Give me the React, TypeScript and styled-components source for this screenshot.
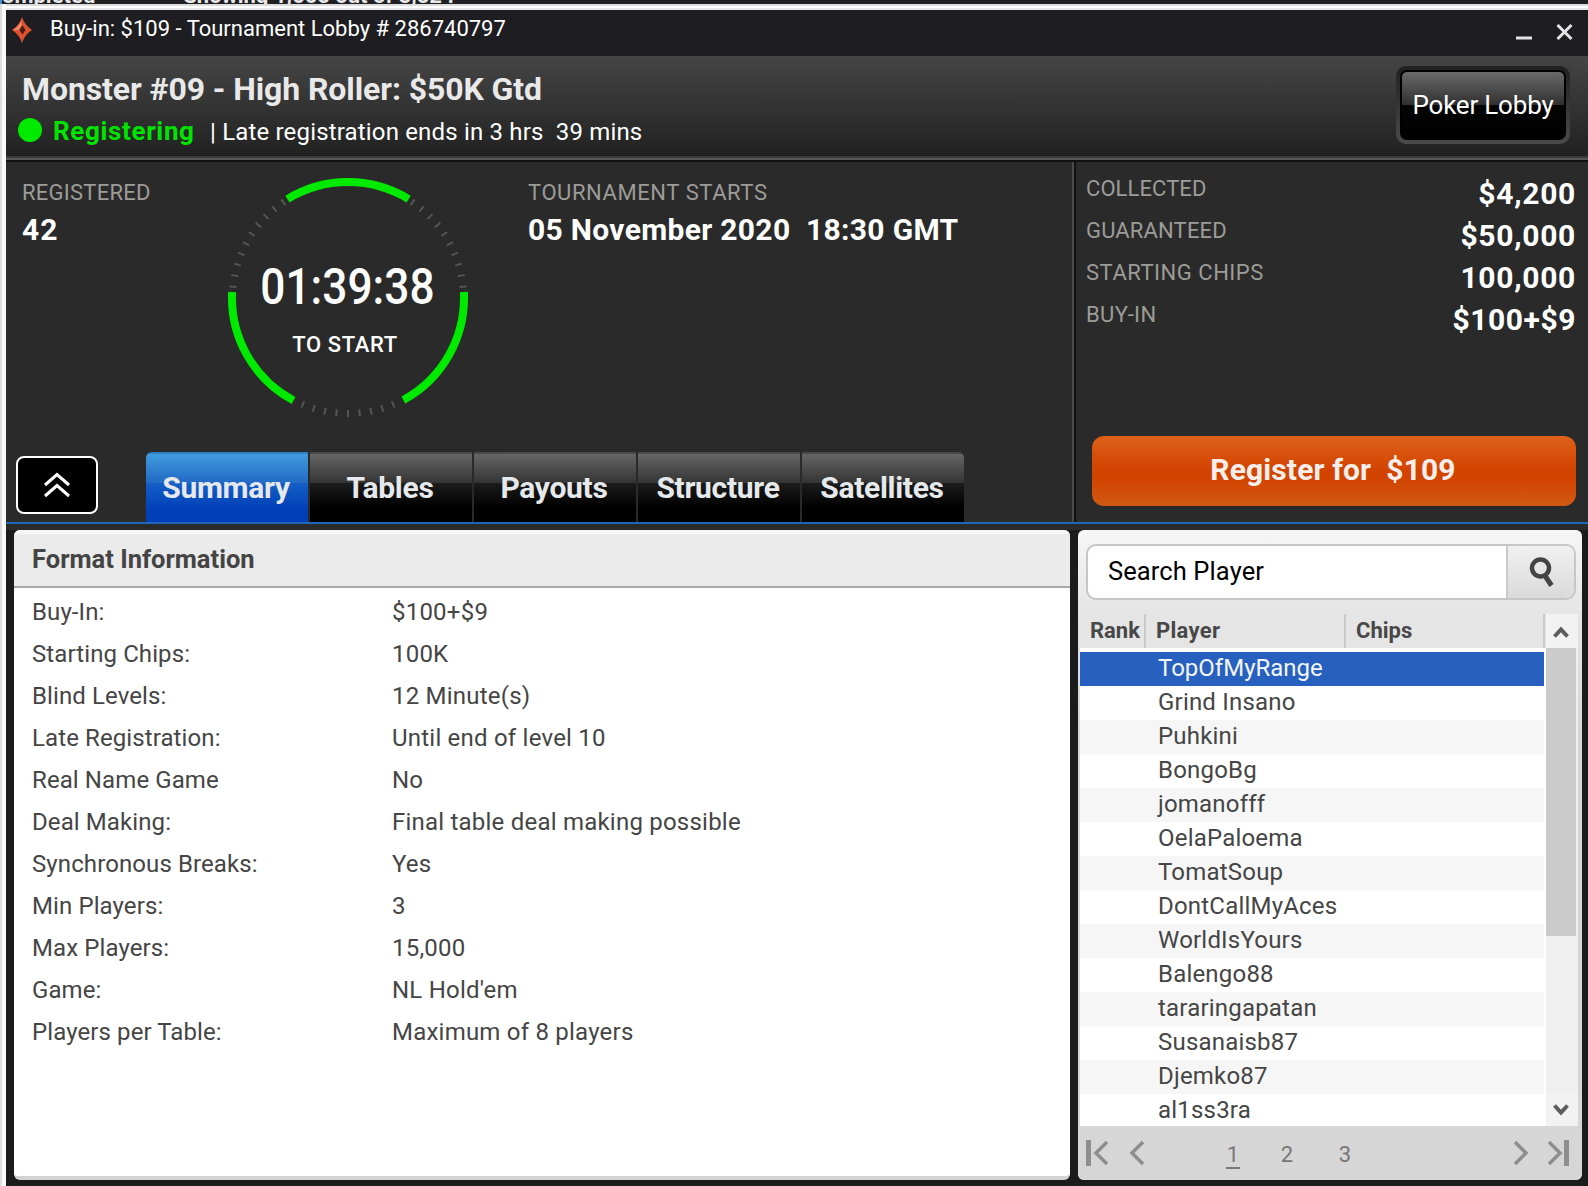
import React from 'react';
import styled, { createGlobalStyle, css } from 'styled-components';

const GlobalStyle = createGlobalStyle`
  *, *::before, *::after { box-sizing: border-box; }
  html, body { margin: 0; padding: 0; background: #1b1b1b; }
  body { font-family: Roboto, "Liberation Sans", sans-serif; overflow: hidden; }
  button { font: inherit; padding: 0; border: 0; margin: 0; cursor: pointer; }
  svg { display: block; flex: none; }
`;

const Screen = styled.div`
  width: 1588px;
  height: 1186px;
  display: flex;
  flex-direction: column;
  overflow: hidden;
`;

const Backdrop = styled.div`
  height: 4px;
  flex: none;
  display: flex;
  align-items: flex-end;
  gap: 88px;
  overflow: hidden;
  border-left: 2px solid #4a90d9;
  background: #1f1f24;
  color: #e8e8e8;
  font-size: 22px;
  font-weight: 700;
  line-height: 26px;
  white-space: nowrap;

  span { margin-bottom: -5px; }
`;

const Frame = styled.div`
  flex: 1;
  min-height: 0;
  display: flex;
  flex-direction: column;
  border-left: 6px solid #f8f8f8;
  box-shadow: inset 0 2px #dddddd, inset 0 4px #ffffff, inset 0 6px #e9e9e9;
  background: linear-gradient(90deg, #dedede 2px, #fafafa 2px) border-box;
  border-left-color: transparent;
  padding-top: 6px;
`;

const TitleBar = styled.header`
  height: 46px;
  flex: none;
  display: flex;
  align-items: flex-start;
  padding: 0 15px 0 6px;
  background: #1d1d22;
  color: #fff;
`;

const LogoSlot = styled.span`
  padding-top: 7px;
  width: 38px;
`;

const TitleText = styled.h1`
  flex: 1;
  margin: 6px 0 0;
  font-size: 22px;
  font-weight: 400;
  line-height: 25px;
`;

const WindowControls = styled.div`
  display: flex;
  gap: 24px;
  padding-top: 14px;
`;

const Banner = styled.section`
  height: 106px;
  flex: none;
  display: flex;
  justify-content: space-between;
  padding: 10px 18px 0 15px;
  background: linear-gradient(#454545, #212121 100px) no-repeat 0 0 / 100% 100px, #2a2a2a;
  box-shadow: inset 0 -2px #101010, inset 0 -4px #575757, inset 0 -6px #3a3a3a;
`;

const BannerTitle = styled.h2`
  margin: 4px 0 8px 1px;
  font-size: 32px;
  font-weight: 700;
  line-height: 38px;
  letter-spacing: -0.09px;
  color: #e9e9e9;
`;

const StatusRow = styled.div`
  display: flex;
  align-items: flex-start;
  line-height: 28px;
  color: #fff;
`;

const StatusDot = styled.span`
  width: 24px;
  height: 24px;
  margin: 2px 11px 0 -3px;
  border-radius: 50%;
  background: #00ea00;
`;

const StatusName = styled.strong`
  width: 157px;
  font-size: 26px;
  line-height: 30px;
  letter-spacing: 0.65px;
  color: #00e400;
`;

const StatusNote = styled.span`
  padding-top: 2px;
  font-size: 24px;
  letter-spacing: 0.17px;
  white-space: pre;
`;

const LobbyButton = styled.button`
  width: 174px;
  height: 78px;
  padding: 4px;
  border-radius: 10px;
  background: linear-gradient(#202020, #4b4b4b);
`;

const LobbyFace = styled.span`
  display: flex;
  align-items: center;
  justify-content: center;
  height: 70px;
  border: 2px solid #000;
  border-radius: 7px;
  background: linear-gradient(#6a6a6a, #303030 50%, #050505 50%, #000);
  color: #fff;
  font-size: 26px;
  letter-spacing: -0.2px;
`;

const InfoBand = styled.section`
  height: 362px;
  flex: none;
  display: flex;
  border-bottom: 2px solid #1f66b8;
  background: #2a2a2a;
`;

const InfoMain = styled.div`
  width: 1066px;
  display: flex;
  flex-direction: column;
  justify-content: space-between;
`;

const Stats = styled.div`
  display: grid;
  grid-template-columns: 206px 240px 1fr;
  padding-left: 16px;
`;

const Stat = styled.div<{ $indent?: number }>`
  padding: 18px 0 0 ${p => p.$indent ?? 0}px;
`;

const Caption = styled.div<{ $track?: number }>`
  font-size: 22px;
  line-height: 25px;
  letter-spacing: ${p => p.$track ?? 0.2}px;
  color: #9c9c98;
`;

const Figure = styled.div<{ $track?: number }>`
  font-size: 30px;
  font-weight: 700;
  line-height: 35px;
  letter-spacing: ${p => p.$track ?? 1}px;
  color: #fff;
  white-space: pre;
`;

const StatFigure = styled(Figure)`
  margin-top: 7px;
`;

const Dial = styled.div`
  display: grid;
  width: 240px;
  height: 240px;
  margin-top: 16px;

  > * { grid-area: 1 / 1; }
`;

const DialReadout = styled.div`
  display: flex;
  flex-direction: column;
  align-items: center;
  padding-top: 80px;
  color: #fff;
`;

const Clock = styled.time`
  margin-right: 2px;
  font-size: 50px;
  font-weight: 500;
  line-height: 58px;
  transform: scaleX(0.885);
`;

const DialLabel = styled.span`
  margin: 16px 6px 0 0;
  font-size: 22px;
  font-weight: 500;
  line-height: 25px;
  letter-spacing: 0.6px;
`;

const Toolbar = styled.div`
  display: flex;
  padding-left: 10px;
`;

const CollapseButton = styled.button`
  display: flex;
  align-items: center;
  justify-content: center;
  width: 82px;
  height: 58px;
  margin: 4px 48px 8px 0;
  border: 2px solid #fff;
  border-radius: 8px;
  background: #000;
`;

const Tabs = styled.nav`
  display: flex;
  gap: 2px;
`;

const Tab = styled.button<{ $active?: boolean }>`
  display: flex;
  justify-content: center;
  width: 162px;
  height: 70px;
  padding: 18px 2px 0 0;
  color: #e6e9ec;
  font-size: 30px;
  font-weight: 700;
  line-height: 35px;
  letter-spacing: -0.3px;
  background: linear-gradient(#4a4a4a 2px, #666 2px, #343434 31px, #1c1c1c 31px, #000 56px);

  &:first-child { border-top-left-radius: 6px; }
  &:last-child { border-top-right-radius: 6px; }

  ${p => p.$active && css`
    background: linear-gradient(#2d82c6 2px, #419cdc 2px, #2269c6 31px, #155fc6 31px, #003fb8 58px);
  `}
`;

const Prize = styled.aside`
  flex: 1;
  display: flex;
  flex-direction: column;
  padding: 14px 12px 16px 10px;
  border-left: 2px solid #111;
  box-shadow: -2px 0 #4a4a4a;
  margin-left: 2px;
`;

const PrizeRow = styled.div`
  display: flex;
  justify-content: space-between;
  height: 42px;
`;

const RegisterButton = styled.button`
  height: 70px;
  margin: auto 0 0 6px;
  padding: 16px 2px 19px 0;
  border-radius: 12px;
  background: linear-gradient(#dd611a, #d34300 48%, #d24400 62%, #d05a14);
  color: #f6eeea;
  font-size: 30px;
  font-weight: 700;
  line-height: 35px;
  letter-spacing: 0.12px;
  white-space: pre;
`;

const Body = styled.main`
  flex: 1;
  min-height: 0;
  display: flex;
  gap: 8px;
  padding: 6px 6px 6px 8px;
  background: linear-gradient(#2a2a2a 6px, #1b1b1b 6px);
`;

const FormatPanel = styled.section`
  width: 1056px;
  border-radius: 6px;
  overflow: hidden;
  background: #fff;
  border-bottom: 4px solid #d3d3d3;
`;

const FormatHeading = styled.h3`
  height: 58px;
  margin: 0;
  padding: 14px 18px 0;
  border-bottom: 2px solid #a8a8a8;
  background: linear-gradient(#f6f6f6 4px, #ebebeb 4px);
  color: #444;
  font-size: 25.5px;
  font-weight: 700;
  line-height: 30px;
`;

const FormatList = styled.dl`
  margin: 0;
  padding: 3px 18px 0;
`;

const FormatRow = styled.div`
  display: flex;
  height: 42px;
  font-size: 24px;
  line-height: 42px;
  letter-spacing: 0.22px;
  color: #454545;

  dt { width: 360px; letter-spacing: 0.1px; }
  dd { margin: 0; }
`;

const PlayerPanel = styled.section`
  width: 504px;
  display: flex;
  flex-direction: column;
  border-radius: 6px;
  overflow: hidden;
  background: linear-gradient(#f6f6f6, #e5e5e5 84px, #d6d6d6 200px);
`;

const Search = styled.form`
  display: flex;
  height: 56px;
  flex: none;
  margin: 14px 6px 14px 8px;
  border: 2px solid #c6c6c6;
  border-radius: 10px;
  overflow: hidden;
  background: #fff;
`;

const SearchText = styled.span`
  flex: 1;
  padding: 10px 0 0 20px;
  font-size: 25.5px;
  line-height: 30px;
  letter-spacing: 0.1px;
  color: #000;
`;

const SearchButton = styled.button`
  display: flex;
  width: 68px;
  padding: 10px 0 0 21px;
  border-left: 2px solid #cbcbcb;
  background: linear-gradient(#f0f0f0, #dadada);
`;

const Grid = styled.div`
  display: flex;
  height: 512px;
  flex: none;
  margin: 0 4px 0 2px;
  background: #fff;
`;

const Roster = styled.div`
  width: 466px;
  overflow: hidden;
`;

const RosterHead = styled.div`
  display: grid;
  grid-template-columns: 66px 200px 199px;
  height: 34px;
  margin-bottom: 4px;
  background: #e5e5e5;
`;

const HeadCell = styled.span<{ $track?: number }>`
  padding: 4px 0 0 10px;
  border-right: 2px solid #c9c9c9;
  font-size: 22px;
  font-weight: 700;
  line-height: 25px;
  letter-spacing: ${p => p.$track ?? 0}px;
  color: #484848;
`;

const PlayerRow = styled.div<{ $selected?: boolean }>`
  width: 464px;
  height: 34px;
  padding: 2px 0 0 78px;
  font-size: 24px;
  line-height: 28px;
  letter-spacing: 0.2px;
  color: #454545;

  &:nth-child(odd) { background: #f6f6f6; }

  ${p => p.$selected && css`
    && { background: #2860c0; color: #f2f6fc; letter-spacing: 0; }
  `}
`;

const RosterRows = styled.div``;

const ScrollBar = styled.div`
  flex: 1;
  display: flex;
  flex-direction: column;
  background: #efefef;
`;

const ScrollArrow = styled.button`
  display: flex;
  align-items: center;
  justify-content: center;
  height: 34px;
  padding: 2px 2px 0 0;
  background: #f2f2f2;
`;

const ScrollThumb = styled.div`
  width: 30px;
  height: 288px;
  margin-bottom: auto;
  background: #cbcbcb;
`;

const Pager = styled.footer`
  flex: 1;
  display: flex;
  align-items: flex-start;
  padding: 14px 12px 0 8px;
  background: #d6d6d6;
`;

const PagerGroup = styled.div<{ $gap: number }>`
  display: flex;
  gap: ${p => p.$gap}px;
`;

const Pages = styled.div`
  display: flex;
  flex: 1;
  gap: 40px;
  padding-left: 82px;
`;

const Page = styled.a<{ $current?: boolean }>`
  width: 14px;
  height: 29px;
  padding-top: 2px;
  text-align: center;
  font-size: 22px;
  line-height: 25px;
  color: #777;
  border-bottom: ${p => (p.$current ? '2px solid #777' : '0')};

  &:last-child { margin-left: 4px; }
`;

const polar = (deg: number, r: number) => {
  const a = (deg * Math.PI) / 180;
  return [120 + r * Math.sin(a), 120 - r * Math.cos(a)].map(n => n.toFixed(2)).join(' ');
};

const arc = (from: number, to: number) => `M${polar(from, 116)}A116 116 0 0 1 ${polar(to, 116)}`;

const ticks = [
  ...Array.from({ length: 10 }, (_, i) => 34 + i * 5.6),
  ...Array.from({ length: 9 }, (_, i) => 157 + i * 5.75),
  ...Array.from({ length: 10 }, (_, i) => 275.6 + i * 5.6),
];

const DialRing = () => (
  <svg width="240" height="240" viewBox="0 0 240 240" fill="none">
    {ticks.map(t => (
      <path key={t} d={`M${polar(t, 112)}L${polar(t, 119)}`} stroke="#555" strokeWidth="2" />
    ))}
    <path d={`${arc(-31.5, 31.5)}${arc(87, 151.5)}${arc(208, 273)}`} stroke="#00ea00" strokeWidth="8" />
  </svg>
);

const Logo = () => (
  <svg width="20" height="26" viewBox="0 0 20 26">
    <path d="M10 0Q12.500 8 20 13Q12.500 18 10 26Q7.500 18 0 13Q7.500 8 10 0Z" fill="#dc5230" />
    <path d="M9.500 3Q7.500 9.500 1 13L6.500 13L9.500 8Z" fill="#ec9070" />
    <path d="M10.500 8.500L13.500 13L10.500 17.500L7.500 13Z" fill="#4a1a14" />
  </svg>
);

const stats = [
  { label: 'COLLECTED', value: '$4,200', track: 0.08, spread: 0.7 },
  { label: 'GUARANTEED', value: '$50,000', track: 0.16, spread: 0.7 },
  { label: 'STARTING CHIPS', value: '100,000', track: 0.52, spread: 0.7 },
  { label: 'BUY-IN', value: '$100+$9', track: 0.35, spread: 0.55 },
];

const format = [
  ['Buy-In:', '$100+$9'],
  ['Starting Chips:', '100K'],
  ['Blind Levels:', '12 Minute(s)'],
  ['Late Registration:', 'Until end of level 10'],
  ['Real Name Game', 'No'],
  ['Deal Making:', 'Final table deal making possible'],
  ['Synchronous Breaks:', 'Yes'],
  ['Min Players:', '3'],
  ['Max Players:', '15,000'],
  ['Game:', "NL Hold'em"],
  ['Players per Table:', 'Maximum of 8 players'],
];

const players = [
  'TopOfMyRange', 'Grind Insano', 'Puhkini', 'BongoBg', 'jomanofff', 'OelaPaloema', 'TomatSoup',
  'DontCallMyAces', 'WorldIsYours', 'Balengo88', 'tararingapatan', 'Susanaisb87', 'Djemko87', 'al1ss3ra',
];

const tabs = ['Summary', 'Tables', 'Payouts', 'Structure', 'Satellites'];

export default function App() {
  return (
    <Screen>
      <GlobalStyle />
      <Backdrop>
        <span>ompleted</span>
        <span>Showing 1,665 out of 3,524</span>
      </Backdrop>
      <Frame>
        <TitleBar>
          <LogoSlot><Logo /></LogoSlot>
          <TitleText>Buy-in: $109 - Tournament Lobby # 286740797</TitleText>
          <WindowControls>
            <svg width="16" height="16" viewBox="0 0 16 16"><path d="M0 14h16" stroke="#e4e4e4" strokeWidth="3" /></svg>
            <svg width="17" height="16" viewBox="0 0 17 16"><path d="M1.500 1L15.500 15M15.500 1L1.500 15" stroke="#e4e4e4" strokeWidth="3" /></svg>
          </WindowControls>
        </TitleBar>

        <Banner>
          <div>
            <BannerTitle>Monster #09 - High Roller: $50K Gtd</BannerTitle>
            <StatusRow>
              <StatusDot />
              <StatusName>Registering</StatusName>
              <StatusNote>{'| Late registration ends in 3 hrs  39 mins'}</StatusNote>
            </StatusRow>
          </div>
          <LobbyButton><LobbyFace>Poker Lobby</LobbyFace></LobbyButton>
        </Banner>

        <InfoBand>
          <InfoMain>
            <Stats>
              <Stat>
                <Caption $track={0.25}>REGISTERED</Caption>
                <StatFigure>42</StatFigure>
              </Stat>
              <Dial>
                <DialRing />
                <DialReadout>
                  <Clock>01:39:38</Clock>
                  <DialLabel>TO START</DialLabel>
                </DialReadout>
              </Dial>
              <Stat $indent={60}>
                <Caption $track={0.58}>TOURNAMENT STARTS</Caption>
                <StatFigure $track={0.32}>{'05 November 2020  18:30 GMT'}</StatFigure>
              </Stat>
            </Stats>
            <Toolbar>
              <CollapseButton>
                <svg width="26" height="26" viewBox="0 0 26 26" fill="none" stroke="#fff" strokeWidth="3">
                  <path d="M1 13L13 2.500L25 13M1 24L13 13.500L25 24" />
                </svg>
              </CollapseButton>
              <Tabs>
                {tabs.map((t, i) => <Tab key={t} $active={i === 0}>{t}</Tab>)}
              </Tabs>
            </Toolbar>
          </InfoMain>
          <Prize>
            {stats.map(s => (
              <PrizeRow key={s.label}>
                <Caption $track={s.track}>{s.label}</Caption>
                <Figure $track={s.spread}>{s.value}</Figure>
              </PrizeRow>
            ))}
            <RegisterButton>{'Register for  $109'}</RegisterButton>
          </Prize>
        </InfoBand>

        <Body>
          <FormatPanel>
            <FormatHeading>Format Information</FormatHeading>
            <FormatList>
              {format.map(([k, v]) => (
                <FormatRow key={k}><dt>{k}</dt><dd>{v}</dd></FormatRow>
              ))}
            </FormatList>
          </FormatPanel>

          <PlayerPanel>
            <Search>
              <SearchText>Search Player</SearchText>
              <SearchButton type="button">
                <svg width="26" height="32" viewBox="0 0 26 32" fill="none" stroke="#444">
                  <circle cx="11.500" cy="12" r="8.500" strokeWidth="4.500" />
                  <path d="M15.500 19L22.500 29.500" strokeWidth="5" />
                </svg>
              </SearchButton>
            </Search>
            <Grid>
              <Roster>
                <RosterHead>
                  <HeadCell>Rank</HeadCell>
                  <HeadCell $track={0.3}>Player</HeadCell>
                  <HeadCell>Chips</HeadCell>
                </RosterHead>
                <RosterRows>
                  {players.map((p, i) => <PlayerRow key={p} $selected={i === 0}>{p}</PlayerRow>)}
                </RosterRows>
              </Roster>
              <ScrollBar>
                <ScrollArrow>
                  <svg width="16" height="14" viewBox="0 0 16 14" fill="none" stroke="#5c5c5c" strokeWidth="4"><path d="M1.500 11.500L8 4.500L14.500 11.500" /></svg>
                </ScrollArrow>
                <ScrollThumb />
                <ScrollArrow>
                  <svg width="16" height="14" viewBox="0 0 16 14" fill="none" stroke="#5c5c5c" strokeWidth="4"><path d="M1.500 2.500L8 9.500L14.500 2.500" /></svg>
                </ScrollArrow>
              </ScrollBar>
            </Grid>
            <Pager>
              <PagerGroup $gap={20}>
                <svg width="24" height="26" viewBox="0 0 24 26" fill="none" stroke="#8e8e8e">
                  <path d="M2.500 0V26" strokeWidth="5" /><path d="M21 2L10 13L21 24" strokeWidth="3.500" />
                </svg>
                <svg width="14" height="26" viewBox="0 0 14 26" fill="none" stroke="#8e8e8e">
                  <path d="M13 2L2 13L13 24" strokeWidth="3.500" />
                </svg>
              </PagerGroup>
              <Pages>
                <Page $current>1</Page>
                <Page>2</Page>
                <Page>3</Page>
              </Pages>
              <PagerGroup $gap={20}>
                <svg width="14" height="26" viewBox="0 0 14 26" fill="none" stroke="#8e8e8e">
                  <path d="M1 2L12 13L1 24" strokeWidth="3.500" />
                </svg>
                <svg width="22" height="26" viewBox="0 0 22 26" fill="none" stroke="#8e8e8e">
                  <path d="M1 2L12 13L1 24" strokeWidth="3.500" /><path d="M18.500 0V26" strokeWidth="5" />
                </svg>
              </PagerGroup>
            </Pager>
          </PlayerPanel>
        </Body>
      </Frame>
    </Screen>
  );
}
